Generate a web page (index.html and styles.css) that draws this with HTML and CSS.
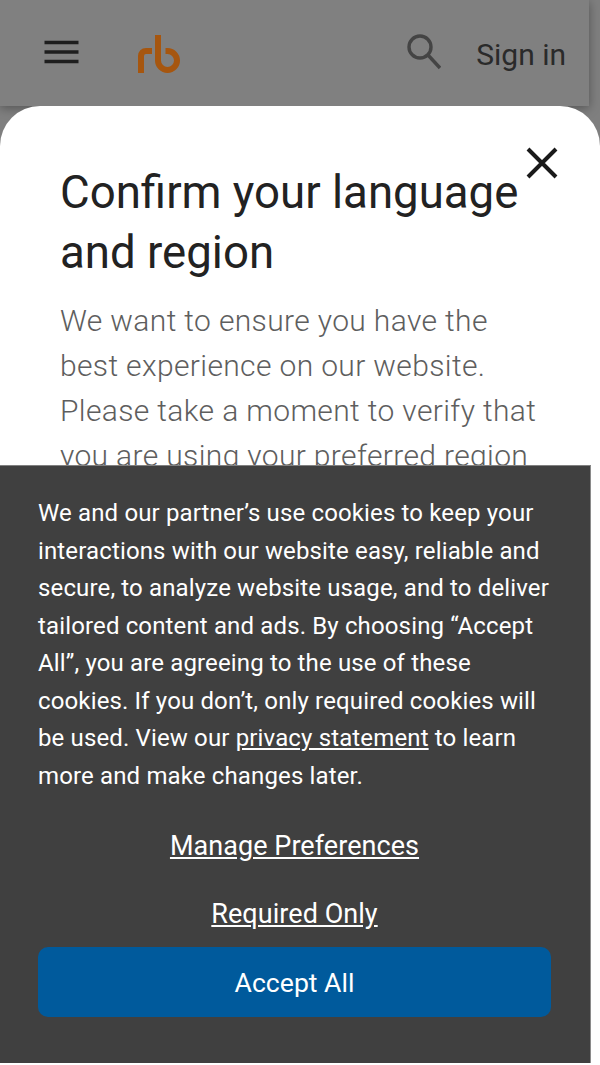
FILE: index.html
```html
<!DOCTYPE html>
<html lang="en">
<head>
<meta charset="utf-8">
<title>Confirm your language and region</title>
<link rel="stylesheet" href="styles.css">
</head>
<body>
<header class="site-header">
  <svg class="menu-icon" viewBox="0 0 34 24" aria-label="Menu"><path d="M0 2.500h34M0 12h34M0 21.500h34"/></svg>
  <svg class="logo" viewBox="0 0 42 38" aria-label="rb"><path d="M3 38V21c0-3 2-5 5-5h6M20 0V25.500a9.500 9.500 0 1 0 9.500-9.500h-2"/></svg>
  <svg class="search-icon" viewBox="0 0 34 36" aria-label="Search"><circle cx="13" cy="13" r="11"/><path d="M21 21l12 13"/></svg>
  <span class="sign-in">Sign in</span>
</header>
<main class="modal">
  <button class="close" aria-label="Close"><svg viewBox="0 0 32 32"><path d="M2 2l28 28M30 2L2 30"/></svg></button>
  <h1 class="modal-title">Confirm your language and region</h1>
  <p class="modal-text">We want to ensure you have the best experience on our website. Please take a moment to verify that you are using your preferred region</p>
</main>
<section class="cookie">
  <p class="cookie-text">We and our partner’s use cookies to keep your interactions with our website easy, reliable and secure, to analyze website usage, and to deliver tailored content and ads. By choosing “Accept All”, you are agreeing to the use of these cookies. If you don’t, only required cookies will be used. View our <a href="#">privacy statement</a> to learn more and make changes later.</p>
  <a class="cookie-link first" href="#">Manage Preferences</a>
  <a class="cookie-link second" href="#">Required Only</a>
  <button class="accept">Accept All</button>
</section>
</body>
</html>
```

FILE: styles.css
```css
* { box-sizing: border-box; }
html, body { margin: 0; padding: 0; }
body {
  width: 600px;
  height: 1065px;
  overflow: hidden;
  background: #fff;
  font-family: Roboto, "Liberation Sans", sans-serif;
  position: relative;
}
body::before {
  content: "";
  position: absolute;
  left: 0; top: 0; right: 0;
  height: 160px;
  background: #7f7f7f;
}
.site-header {
  position: relative;
  width: 589px;
  height: 106px;
  background: #808080;
  box-shadow: 0 2px 10px rgba(0,0,0,.35);
  display: flex;
  align-items: center;
  padding: 0 23px 0 44px;
}
.menu-icon { width: 35px; height: 24px; margin-top: -2px; fill: none; stroke: #1e1e1e; stroke-width: 3.6; }
.logo { width: 42px; height: 38px; margin-left: 59px; margin-top: 2px; fill: none; stroke: #a6560f; stroke-width: 6; }
.search-icon { width: 34px; height: 36px; margin-left: auto; margin-top: -2px; fill: none; stroke: #444; stroke-width: 3.4; }
.sign-in { margin-left: 35px; margin-top: 2px; font-size: 30px; color: #2a2a2a; }
.modal {
  position: relative;
  height: 359px;
  background: #fff;
  border-radius: 40px 40px 0 0;
  padding: 57px 60px 0;
  overflow: hidden;
}
.close {
  position: absolute;
  top: 41px; right: 42px;
  width: 32px; height: 32px;
  padding: 0; border: 0; background: none;
}
.close svg { display: block; fill: none; stroke: #1a1a1a; stroke-width: 4; }
.modal-title { margin: 0; font-size: 45.6px; font-weight: 400; line-height: 60px; color: #222; }
.modal-text { margin: 15px 0 0; font-size: 30px; font-weight: 300; line-height: 45px; letter-spacing: .36px; color: #5e5e5e; }
.cookie {
  position: absolute;
  left: 0; top: 465px;
  width: 591px; height: 598px;
  background: #404040;
  padding: 29px 39px 0 38px;
  border-top: 1px solid #808080;
  border-right: 1px solid #8a8a8a;
  color: #fff;
  display: flex;
  flex-direction: column;
  align-items: center;
}
.cookie-text { margin: 0 -6px 0 0; font-size: 24px; font-weight: 400; line-height: 37.5px; letter-spacing: .14px; }
.cookie-text a { color: #fff; }
.cookie-link { color: #fff; font-size: 27px; line-height: 36px; letter-spacing: .05px; }
.first { margin-top: 33px; }
.second { margin-top: 32px; }
.accept {
  margin-top: 15px;
  width: 100%; height: 70px;
  border: 0; border-radius: 10px;
  background: #005a9c;
  color: #fff;
  font: 400 26.6px Roboto, "Liberation Sans", sans-serif;
}
```
